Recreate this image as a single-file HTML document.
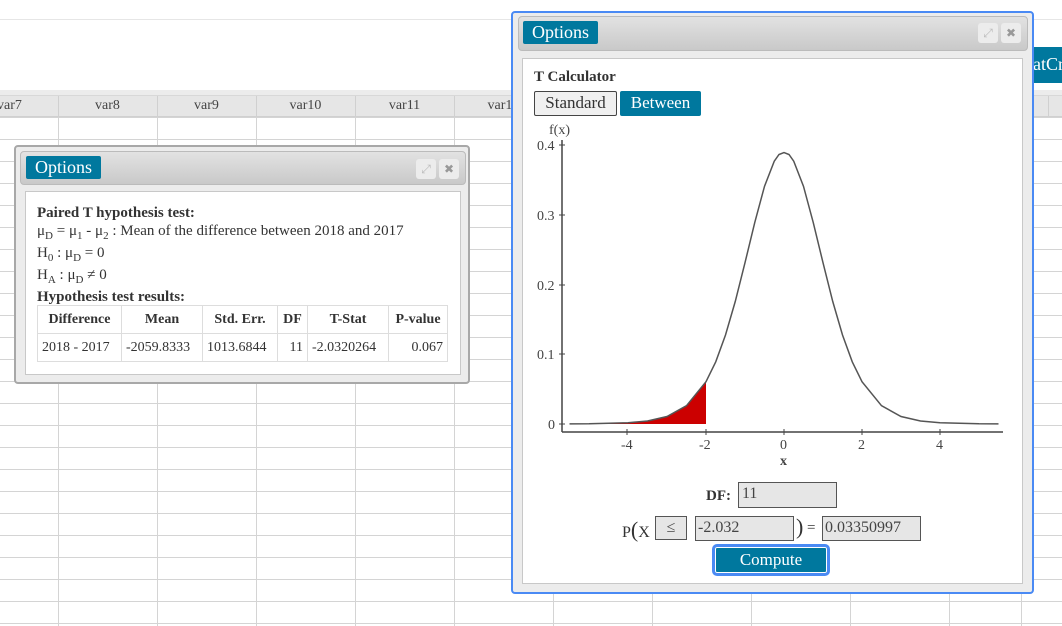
<!DOCTYPE html>
<html><head><meta charset="utf-8"><style>
*{margin:0;padding:0;box-sizing:border-box}
body{width:1062px;height:626px;overflow:hidden;background:#fff;position:relative;font-family:"Liberation Serif",serif;color:#333}
.abs{position:absolute}
.grid{position:absolute;left:0;top:117px;width:1062px;height:509px;
background-image:repeating-linear-gradient(to bottom,#d4d4d4 0,#d4d4d4 1px,transparent 1px,transparent 22px),
repeating-linear-gradient(to right,transparent 0,transparent 58px,#d4d4d4 58px,#d4d4d4 59px,transparent 59px,transparent 99px);background-position:0 0,-99px 0}
.hdr{position:absolute;left:0;top:95px;width:1062px;height:22px;background:#e6e6e6;border-top:1px solid #d8d8d8;border-bottom:1px solid #d0d0d0}
.hdr span{position:absolute;top:2px;font-size:14px;color:#444;width:99px;text-align:center}
.dlg{position:absolute;background:#ececec;border-radius:4px}
.tbar{position:absolute;background:linear-gradient(#e2e2e2,#c9c9c9);border:1px solid #bbb;border-radius:4px}
.obtn{position:absolute;background:#00789e;color:#fff;font-size:18px;line-height:23px;padding:0 9px;border-radius:2px}
.ico{position:absolute;width:20px;height:20px;background:#ececec;border-radius:3px;color:#bbb;font-size:12px;text-align:center;line-height:20px;font-family:"DejaVu Sans",sans-serif}
.box{position:absolute;background:#fff;border:1px solid #c8c8c8}
table{border-collapse:collapse;font-size:14px}
td,th{border:1px solid #ddd;padding:0 4px;height:28px}
th{font-weight:bold}
sub{font-size:11px;vertical-align:-4px;line-height:0}
.ln{position:absolute;left:21px;font-size:15px;line-height:18px;white-space:nowrap}
.inp{position:absolute;background:#e6e6e6;border:1px solid #555;font-size:16px;line-height:22px;padding-left:3px;color:#444}
</style></head><body>
<div class="abs" style="left:0;top:19px;width:1062px;height:1px;background:#e6e6e6"></div>
<div class="abs" style="left:0;top:90px;width:1062px;height:6px;background:#ececec"></div>
<div class="grid"></div>
<div class="hdr">
<span style="left:-40px">var7</span><span style="left:58px">var8</span><span style="left:157px">var9</span><span style="left:256px">var10</span><span style="left:355px">var11</span><span style="left:454px">var12</span>
<div class="abs" style="left:58px;top:0;width:1px;height:21px;background:#d0d0d0"></div>
<div class="abs" style="left:157px;top:0;width:1px;height:21px;background:#d0d0d0"></div>
<div class="abs" style="left:256px;top:0;width:1px;height:21px;background:#d0d0d0"></div>
<div class="abs" style="left:355px;top:0;width:1px;height:21px;background:#d0d0d0"></div>
<div class="abs" style="left:454px;top:0;width:1px;height:21px;background:#d0d0d0"></div>
<div class="abs" style="left:1048px;top:0;width:1px;height:21px;background:#d0d0d0"></div>
</div>
<div class="abs" style="left:1030px;top:47px;width:40px;height:36px;background:#00789e;color:#fff;font-size:18px;line-height:34px;padding-left:3px">atCr</div>

<!-- left dialog -->
<div class="dlg" style="left:14px;top:145px;width:456px;height:239px;border:2px solid #a8a8a8">
<div class="tbar" style="left:4px;top:4px;width:446px;height:34px"></div>
<div class="obtn" style="left:10px;top:9px">Options</div>
<div class="ico" style="left:400px;top:12px">⤢</div>
<div class="ico" style="left:423px;top:12px;color:#999">✖</div>
<div class="box" style="left:9px;top:44px;width:436px;height:184px"></div>
<div class="ln" style="top:57px"><b>Paired T hypothesis test:</b></div>
<div class="ln" style="top:75px">μ<sub>D</sub> = μ<sub>1</sub> - μ<sub>2</sub> : Mean of the difference between 2018 and 2017</div>
<div class="ln" style="top:97px">H<sub>0</sub> : μ<sub>D</sub> = 0</div>
<div class="ln" style="top:119px">H<sub>A</sub> : μ<sub>D</sub> ≠ 0</div>
<div class="ln" style="top:141px"><b>Hypothesis test results:</b></div>
<table class="abs" style="left:21px;top:158px">
<tr><th style="width:84px">Difference</th><th style="width:81px">Mean</th><th style="width:75px">Std. Err.</th><th style="width:30px">DF</th><th style="width:81px">T-Stat</th><th style="width:59px">P-value</th></tr>
<tr><td>2018 - 2017</td><td>-2059.8333</td><td>1013.6844</td><td style="text-align:right">11</td><td>-2.0320264</td><td style="text-align:right">0.067</td></tr>
</table>
</div>

<!-- right dialog -->
<div class="dlg" style="left:511px;top:11px;width:523px;height:583px;border:2px solid #4a8af4">
<div class="tbar" style="left:5px;top:3px;width:510px;height:35px"></div>
<div class="obtn" style="left:10px;top:8px">Options</div>
<div class="ico" style="left:465px;top:10px">⤢</div>
<div class="ico" style="left:488px;top:10px;color:#999">✖</div>
<div class="box" style="left:9px;top:45px;width:501px;height:526px"></div>
<div class="abs" style="left:21px;top:56px;font-size:15px;font-weight:bold">T Calculator</div>
<div class="abs" style="left:21px;top:78px;width:83px;height:25px;border:1px solid #444;background:#f0f0f0;font-size:17px;text-align:center;line-height:22px;border-radius:2px">Standard</div>
<div class="abs" style="left:107px;top:78px;width:81px;height:25px;background:#00789e;color:#fff;font-size:17px;text-align:center;line-height:24px;border-radius:2px">Between</div>
</div>

<svg class="abs" style="left:0;top:0" width="1062" height="626" font-family="Liberation Serif, serif" font-size="14" fill="#444">
<text x="549" y="134">f(x)</text>
<line x1="562" y1="140" x2="562" y2="432" stroke="#444" stroke-width="1.5"/>
<line x1="562" y1="432" x2="1003" y2="432" stroke="#444" stroke-width="1.5"/>
<g stroke="#444"><line x1="559" y1="145" x2="565" y2="145"/><line x1="559" y1="215" x2="565" y2="215"/><line x1="559" y1="285" x2="565" y2="285"/><line x1="559" y1="354" x2="565" y2="354"/><line x1="559" y1="424" x2="565" y2="424"/>
<line x1="627" y1="429" x2="627" y2="435"/><line x1="706" y1="429" x2="706" y2="435"/><line x1="784" y1="429" x2="784" y2="435"/><line x1="862" y1="429" x2="862" y2="435"/><line x1="940" y1="429" x2="940" y2="435"/></g>
<text x="537" y="150">0.4</text><text x="537" y="220">0.3</text><text x="537" y="290">0.2</text><text x="537" y="359">0.1</text><text x="548" y="429">0</text>
<text x="621" y="449">-4</text><text x="699" y="449">-2</text><text x="780" y="449">0</text><text x="858" y="449">2</text><text x="936" y="449">4</text>
<text x="780" y="465" font-weight="bold">x</text>
<polygon fill="#cc0000" points="569.5,424 569.5,423.8 589,423.8 628,422.7 647.5,421 667,416.5 686.5,405.7 706,381.7 706,424"/>
<polyline fill="none" stroke="#555" stroke-width="1.5" points="569.5,423.9 589,423.8 628,422.7 647.5,421 667,416.5 686.5,405.7 706,381.7 715.75,361.8 725.5,335 735.25,301.5 745,262.7 754.75,222.6 764.5,186.3 774.25,161.2 779,154.5 784,152.5 789,154.5 793.75,161.2 803.5,186.3 813.25,222.6 823,262.7 832.75,301.5 842.5,335 852.25,361.8 862,381.7 881.5,405.7 901,416.5 920.5,421 940,422.7 979,423.8 998.5,423.9"/>
</svg>

<div class="abs" style="left:706px;top:488px;font-size:15px;font-weight:bold">DF:</div>
<div class="inp" style="left:738px;top:482px;width:99px;height:26px">11</div>
<div class="abs" style="left:622px;top:517px;font-size:16px">P<span style="font-size:22px">(</span>X</div>
<div class="inp" style="left:655px;top:516px;width:32px;height:24px;text-align:center;padding:0">≤</div>
<div class="inp" style="left:695px;top:516px;width:99px;height:25px;padding-left:2px">-2.032</div>
<div class="abs" style="left:796px;top:514px;font-size:22px">)</div>
<div class="abs" style="left:807px;top:520px;font-size:15px">=</div>
<div class="inp" style="left:822px;top:516px;width:99px;height:25px;padding-left:2px">0.03350997</div>
<div class="abs" style="left:712px;top:544px;width:118px;height:32px;border:3px solid #4a8af4;border-radius:5px;background:#00789e;box-shadow:inset 0 0 0 1px #fff;color:#fff;font-size:17px;text-align:center;line-height:26px">Compute</div>
</body></html>
